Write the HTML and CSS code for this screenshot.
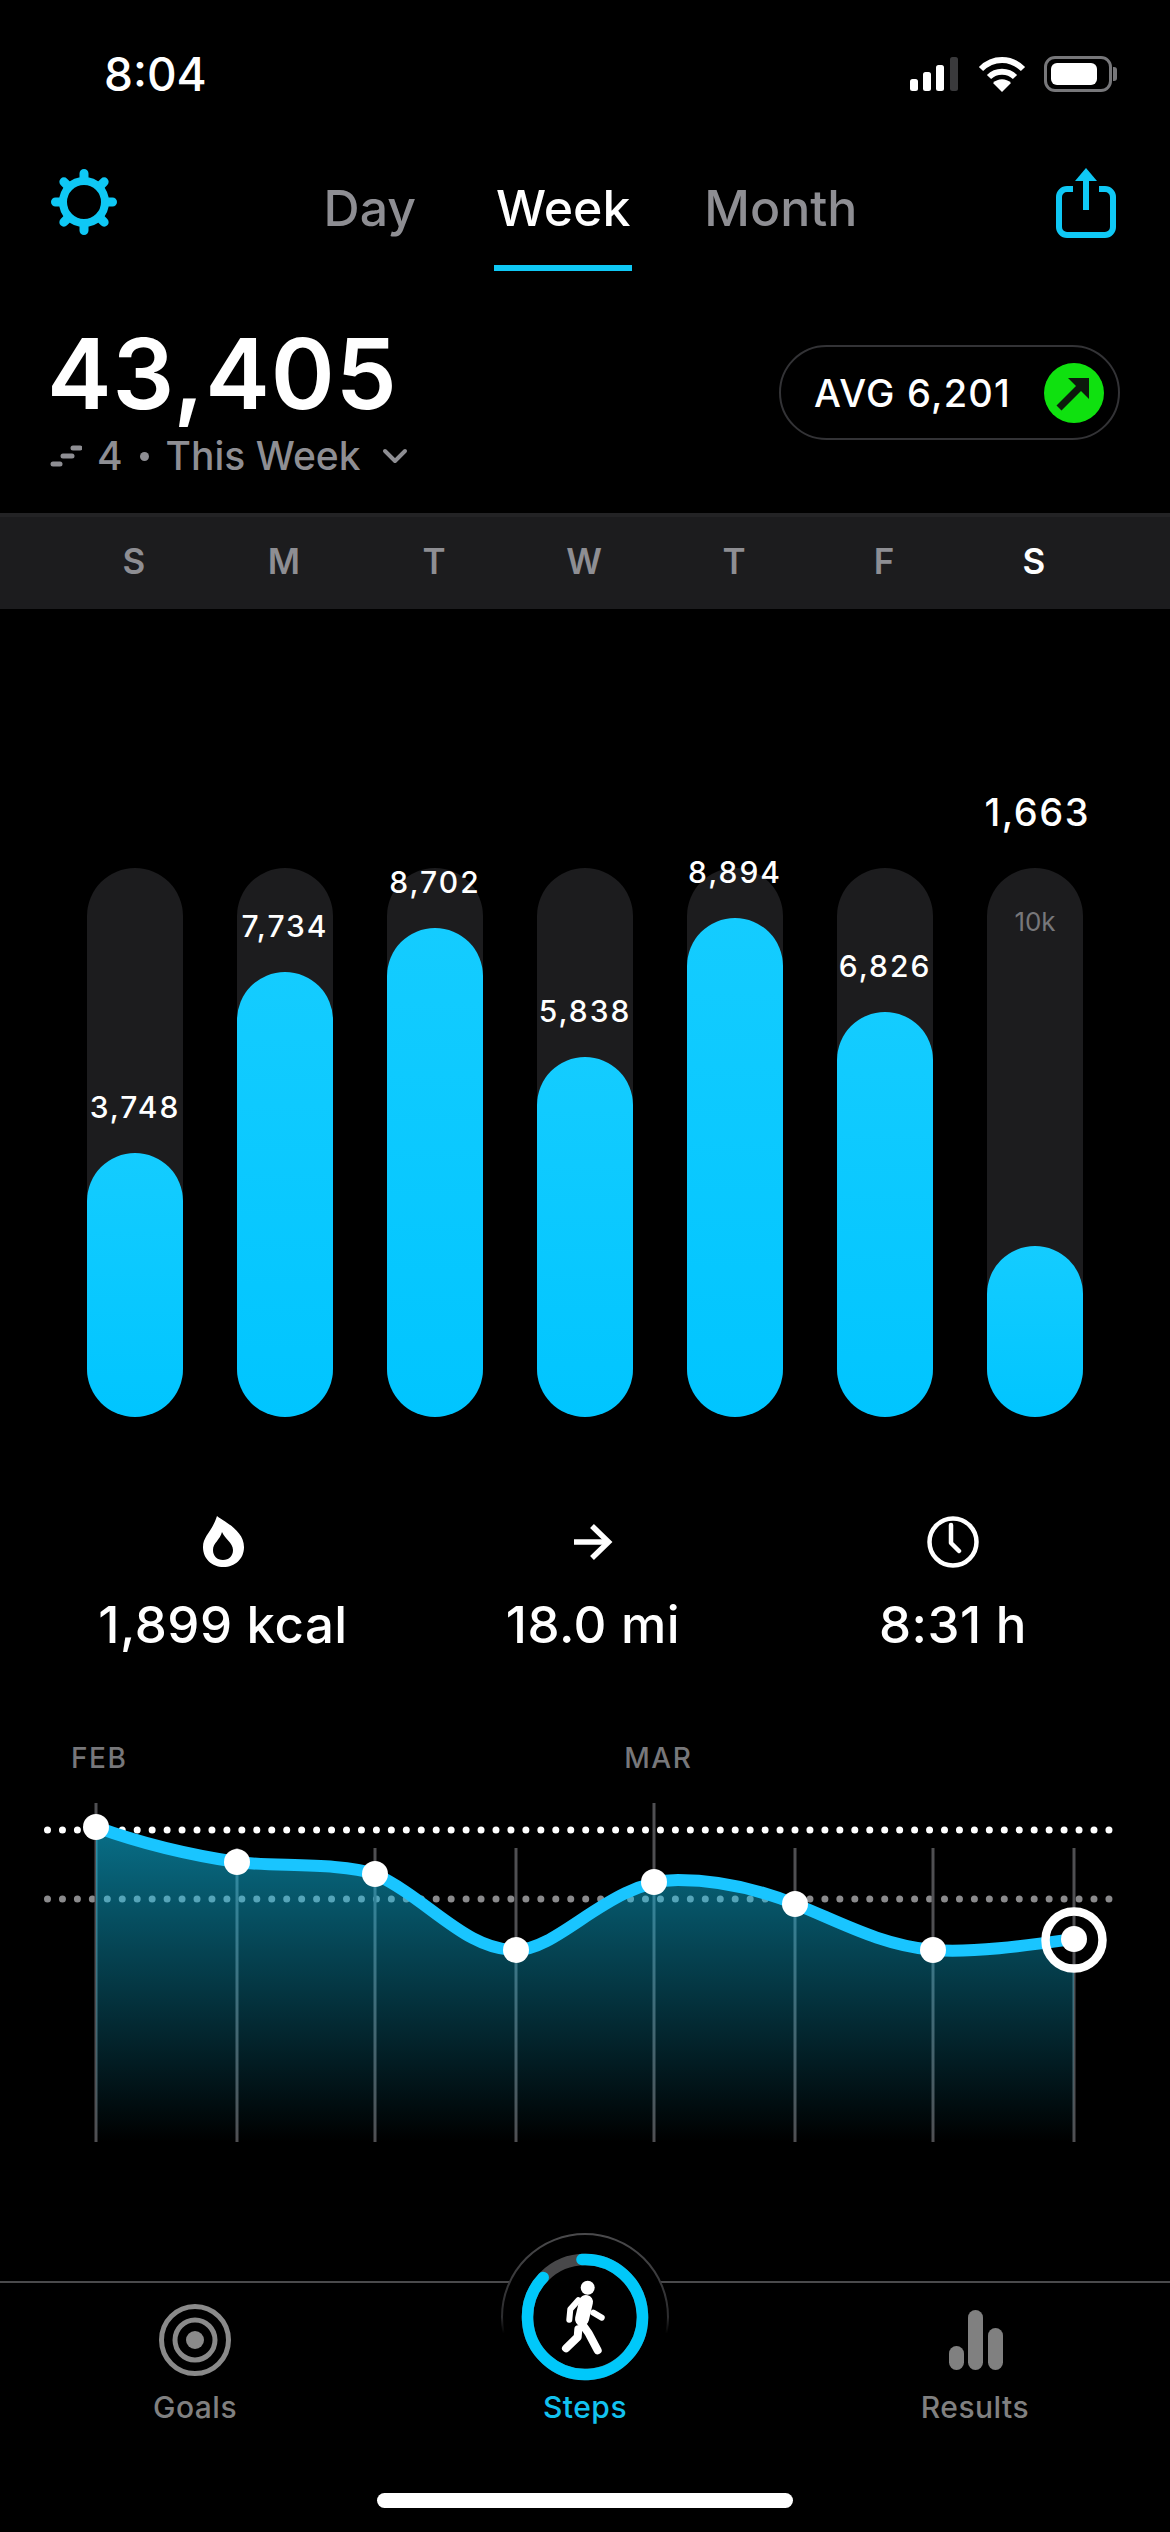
FILE: index.html
```html
<!DOCTYPE html>
<html lang="en">
<head>
  <meta charset="UTF-8" />
  <meta name="viewport" content="width=device-width, initial-scale=1.0"/>
  <title>Steps</title>
  <link rel="stylesheet" href="styles.css">
</head>
<body>

  <!-- Status bar -->
  <div class="status">
    <span class="status-time">8:04</span>
    <div class="status-icons">
      <svg class="signal" width="50" height="34" viewBox="0 0 50 34">
        <rect x="0" y="22" width="8" height="12" rx="2.5" fill="#fff"/>
        <rect x="13" y="15" width="8" height="19" rx="2.5" fill="#fff"/>
        <rect x="26" y="8" width="8" height="26" rx="2.5" fill="#fff"/>
        <rect x="40" y="0" width="8" height="34" rx="2.5" fill="#3a3a3c"/>
      </svg>
      <svg class="wifi" width="48" height="36" viewBox="0 0 48 36" fill="none" stroke="#fff" stroke-width="6">
        <path d="M3 13 C15 1 33 1 45 13"/>
        <path d="M11 21 C18 14 30 14 37 21"/>
        <path d="M24 36 L15 27 C20 22 28 22 33 27 Z" fill="#fff" stroke="none"/>
      </svg>
      <div class="battery"><div class="battery-level"></div></div>
    </div>
  </div>

  <!-- Top navigation -->
  <div class="nav">
    <svg class="gear" width="68" height="68" viewBox="0 0 68 68" fill="none" stroke="#0fc8f5">
      <circle cx="34" cy="34" r="21" stroke-width="8"/>
      <path stroke-width="9" stroke-linecap="round" d="M34 5.5 V10 M54.15 13.85 L51 17 M62.5 34 H58 M54.15 54.15 L51 51 M34 62.5 V58 M13.85 54.15 L17 51 M5.5 34 H10 M13.85 13.85 L17 17"/>
    </svg>
    <div class="range-tabs">
      <span class="range-tab">Day</span>
      <span class="range-tab active">Week</span>
      <span class="range-tab">Month</span>
    </div>
    <svg class="share" width="60" height="70" viewBox="0 0 60 70" fill="none" stroke="#0fc8f5" stroke-width="6">
      <path d="M17 21 H11 a8 8 0 0 0 -8 8 V59 a8 8 0 0 0 8 8 H49 a8 8 0 0 0 8 -8 V29 a8 8 0 0 0 -8 -8 H43"/>
      <path d="M30 42 V8"/>
      <path d="M30 0 L41 13 H19 Z" fill="#0fc8f5" stroke="none"/>
    </svg>
  </div>

  <!-- Total + average -->
  <div class="hero">
    <div>
      <div class="hero-total">43,405</div>
      <div class="hero-sub">
        <svg width="32" height="22" viewBox="0 0 32 22" stroke="#8e8e93" stroke-width="5" stroke-linecap="round">
          <path d="M3 19 H10"/>
          <path d="M13 11 H22"/>
          <path d="M23 3 H30"/>
        </svg>
        <span>4</span>
        <span class="hero-dot"></span>
        <span>This Week</span>
        <svg class="hero-chevron" width="26" height="16" viewBox="0 0 26 16" fill="none" stroke="#8e8e93" stroke-width="4" stroke-linecap="round" stroke-linejoin="round">
          <path d="M3 3 L13 13 L23 3"/>
        </svg>
      </div>
    </div>
    <div class="avg-pill">
      <span>AVG 6,201</span>
      <svg width="60" height="60" viewBox="0 0 60 60">
        <circle cx="30" cy="30" r="30" fill="#0fe10f"/>
        <path d="M15 45 L41 19" stroke="#0c1a0c" stroke-width="7" fill="none"/>
        <path d="M24 15 H45 V36 Z" fill="#0c1a0c"/>
      </svg>
    </div>
  </div>

  <!-- Weekday strip -->
  <div class="days">
    <span>S</span><span>M</span><span>T</span><span>W</span><span>T</span><span>F</span><span class="today">S</span>
  </div>

  <!-- Bars -->
  <div class="today-total">1,663</div>
  <div class="bars">
    <div class="bar-track"><span class="bar-label">3,748</span><div class="bar-fill" style="height:264px"></div></div>
    <div class="bar-track"><span class="bar-label">7,734</span><div class="bar-fill" style="height:445px"></div></div>
    <div class="bar-track"><span class="bar-label">8,702</span><div class="bar-fill" style="height:489px"></div></div>
    <div class="bar-track"><span class="bar-label">5,838</span><div class="bar-fill" style="height:360px"></div></div>
    <div class="bar-track"><span class="bar-label">8,894</span><div class="bar-fill" style="height:499px"></div></div>
    <div class="bar-track"><span class="bar-label">6,826</span><div class="bar-fill" style="height:405px"></div></div>
    <div class="bar-track"><span class="bar-goal">10k</span><div class="bar-fill" style="height:171px"></div></div>
  </div>

  <!-- Stats -->
  <div class="stats">
    <div class="stat">
      <svg width="52" height="52" viewBox="0 0 52 52">
        <path fill="#fff" fill-rule="evenodd" d="M20 0 C26 5 47 14 47 31 C47 43 38 51 26.5 51 C15 51 6 43 6 31 C6 20 15 16 20 0 Z M25 16 C28 23 36 27 36 34 C36 40 32 44 26 44 C20 44 16 40 16 34 C16 27 23 24 25 16 Z"/>
      </svg>
      <span>1,899 kcal</span>
    </div>
    <div class="stat">
      <svg width="52" height="52" viewBox="0 0 52 52" fill="none" stroke="#fff" stroke-width="5.5">
        <path d="M7 26 H41"/>
        <path d="M25 10 L41.5 26 L25 42"/>
      </svg>
      <span>18.0 mi</span>
    </div>
    <div class="stat">
      <svg width="52" height="52" viewBox="0 0 52 52" fill="none" stroke="#fff" stroke-width="4.5">
        <circle cx="26" cy="26" r="23.5"/>
        <path d="M24 9 V27 L32 35" stroke-linecap="round" stroke-linejoin="round"/>
      </svg>
      <span>8:31 h</span>
    </div>
  </div>

  <!-- Trend chart -->
  <div class="months">
    <span class="month-feb">FEB</span>
    <span class="month-mar">MAR</span>
  </div>
  <svg class="trend" width="1170" height="360" viewBox="0 1790 1170 360" fill="none">
    <defs>
      <linearGradient id="areaFade" gradientUnits="userSpaceOnUse" x1="0" y1="1830" x2="0" y2="2142">
        <stop offset="0" stop-color="#0fc8f5" stop-opacity="0.55"/>
        <stop offset="1" stop-color="#0fc8f5" stop-opacity="0"/>
      </linearGradient>
    </defs>

    <path d="M47.5 1830 H1116" stroke="#fff" stroke-width="7" stroke-linecap="round" stroke-dasharray="0 14.95"/>
    <path d="M47.5 1899 H1116" stroke="#8a8a8c" stroke-width="7" stroke-linecap="round" stroke-dasharray="0 14.95"/>

    <g stroke="#4f4f52" stroke-width="3">
      <path d="M96 1803 V2142"/>
      <path d="M237 1848 V2142"/>
      <path d="M375 1848 V2142"/>
      <path d="M516 1848 V2142"/>
      <path d="M654 1803 V2142"/>
      <path d="M795 1848 V2142"/>
      <path d="M933 1848 V2142"/>
      <path d="M1074 1848 V2142"/>
    </g>

    <path d="M96 1827 C140 1843 190 1855 237 1862 C270 1867 340 1862 375 1874 C430 1900 465 1950 516 1950 C560 1950 610 1880 678 1880 C720 1880 760 1890 795 1904 C840 1922 880 1945 933 1950 C975 1953 1030 1945 1074 1939 V2142 H96 Z" fill="url(#areaFade)"/>

    <circle cx="1074" cy="1940" r="29" fill="#000"/>
    <path d="M1074 1911 V1969" stroke="#4f4f52" stroke-width="3"/>

    <path d="M96 1827 C140 1843 190 1855 237 1862 C270 1867 340 1862 375 1874 C430 1900 465 1950 516 1950 C560 1950 610 1880 678 1880 C720 1880 760 1890 795 1904 C840 1922 880 1945 933 1950 C975 1953 1030 1945 1074 1939" stroke="#19c5ff" stroke-width="12"/>

    <g fill="#fff">
      <circle cx="96" cy="1827" r="13"/>
      <circle cx="237" cy="1862" r="13"/>
      <circle cx="375" cy="1874" r="13"/>
      <circle cx="516" cy="1950" r="13"/>
      <circle cx="654" cy="1882" r="13"/>
      <circle cx="795" cy="1904" r="13"/>
      <circle cx="933" cy="1950" r="13"/>
      <circle cx="1074" cy="1939" r="13"/>
    </g>
    <circle cx="1074" cy="1940" r="28.5" stroke="#fff" stroke-width="8.5"/>
  </svg>

  <!-- Tab bar -->
  <div class="tabbar">
    <div class="tab">
      <svg width="72" height="72" viewBox="0 0 72 72" fill="none" stroke="#8a8a8a" stroke-width="5">
        <circle cx="36" cy="36" r="33.5"/>
        <circle cx="36" cy="36" r="20"/>
        <circle cx="36" cy="36" r="9" fill="#8a8a8a" stroke="none"/>
      </svg>
      <span>Goals</span>
    </div>
    <div class="tab tab-main">
      <svg width="168" height="156" viewBox="0 0 168 156" fill="none">
        <defs>
          <linearGradient id="rimFade" x1="0" y1="0" x2="0" y2="1">
            <stop offset="0" stop-color="#4a4a4c"/>
            <stop offset="0.5" stop-color="#2c2c2e"/>
            <stop offset="0.6" stop-color="#000"/>
          </linearGradient>
        </defs>
        <circle cx="84" cy="84" r="83" fill="#000" stroke="url(#rimFade)" stroke-width="2"/>
        <circle cx="84" cy="84" r="57.5" stroke="#48484a" stroke-width="11.5"/>
        <circle cx="84" cy="84" r="57.5" stroke="#00c8fa" stroke-width="11.5" stroke-linecap="round" stroke-dasharray="317 361.3" transform="rotate(-93 84 84)"/>
        <circle cx="86.7" cy="54.7" r="7" fill="#fff"/>
        <g fill="none" stroke="#fff" stroke-linecap="round" stroke-linejoin="round">
          <path d="M85 69 L81 86" stroke-width="14"/>
          <path d="M77.3 67.3 L69.3 76.3 L68.3 86.7" stroke-width="6"/>
          <path d="M92.3 79.7 L100.7 84.7" stroke-width="6"/>
          <path d="M79 88 L87.3 99.7 L96.7 117.3" stroke-width="8"/>
          <path d="M77.3 96.3 L76.7 104 L65 115.3" stroke-width="8"/>
        </g>
      </svg>
      <span>Steps</span>
    </div>
    <div class="tab">
      <svg width="72" height="72" viewBox="0 0 72 72" fill="#808080">
        <rect x="10" y="42" width="15" height="24" rx="7.5"/>
        <rect x="29" y="6" width="15" height="60" rx="7.5"/>
        <rect x="49" y="24" width="15" height="42" rx="7.5"/>
      </svg>
      <span>Results</span>
    </div>
  </div>

  <div class="home-bar"></div>

</body>
</html>
```

FILE: styles.css
```css
* {
  box-sizing: border-box;
}

body {
  margin: 0;
  width: 1170px;
  height: 2532px;
  overflow: hidden;
  background-color: #000;
  color: #fff;
  font-family: Inter, "Liberation Sans", sans-serif;
}

svg {
  display: block;
}

/* Status bar */
.status {
  display: flex;
  justify-content: space-between;
  align-items: center;
  height: 106px;
  padding: 42px 58px 0 104px;
}

.status-time {
  font-size: 46px;
  font-weight: 500;
  line-height: 64px;
}

.status-icons {
  display: flex;
  align-items: center;
  gap: 18px;
}

.battery {
  position: relative;
  width: 68px;
  height: 36px;
  padding: 4px;
  border: 3px solid #77777a;
  border-radius: 11px;
}

.battery-level {
  width: 46px;
  height: 100%;
  background-color: #fff;
  border-radius: 6px;
}

.battery::after {
  content: "";
  position: absolute;
  top: 8px;
  right: -8px;
  width: 4px;
  height: 14px;
  background-color: #77777a;
  border-radius: 0 3px 3px 0;
}

/* Top navigation */
.nav {
  display: flex;
  justify-content: space-between;
  align-items: flex-start;
  height: 194px;
  padding: 62px 54px 0 50px;
}

.range-tabs {
  display: flex;
  gap: 76px;
  margin-top: 10px;
  margin-left: 7px;
}

.range-tab {
  padding-bottom: 27px;
  font-size: 50px;
  font-weight: 500;
  line-height: 60px;
  color: #8e8e93;
}

.range-tab.active {
  margin: 0 -4px 0 2px;
  padding-left: 2px;
  padding-right: 2px;
  color: #fff;
  border-bottom: 6px solid #0fc8f5;
}

/* Total + average */
.hero {
  display: flex;
  justify-content: space-between;
  align-items: flex-start;
  height: 213px;
  padding: 34px 50px 0 47px;
}

.hero-total {
  font-size: 97px;
  font-weight: 600;
  line-height: 80px;
  letter-spacing: 1px;
}

.hero-sub {
  display: flex;
  align-items: center;
  gap: 15px;
  margin-top: 22px;
  margin-left: 3px;
  font-size: 39px;
  font-weight: 500;
  line-height: 40px;
  color: #8e8e93;
}

.hero-sub .hero-dot {
  margin: 0 2px;
}

.hero-dot {
  width: 9px;
  height: 9px;
  background-color: #8e8e93;
  border-radius: 50%;
}

.hero-chevron {
  margin-left: 6px;
}

.avg-pill {
  display: flex;
  align-items: center;
  gap: 33px;
  height: 95px;
  margin-top: 11px;
  padding: 0 14px 0 33px;
  border: 2px solid #333336;
  border-radius: 48px;
  font-size: 38px;
  font-weight: 500;
  letter-spacing: 1.2px;
}

/* Weekday strip */
.days {
  display: grid;
  grid-template-columns: repeat(7, 150px);
  height: 96px;
  padding-left: 59px;
  background-color: #1c1c1e;
  border-top: 4px solid #232325;
  font-size: 35px;
  font-weight: 600;
  line-height: 88px;
  text-align: center;
  color: #8e8e93;
}

.days .today {
  color: #fff;
}

/* Bars */
.today-total {
  width: 1124px;
  margin-top: 181px;
  font-size: 38px;
  font-weight: 500;
  line-height: 44px;
  letter-spacing: 1.5px;
  text-align: right;
  padding-right: 34px;
}

.bars {
  display: flex;
  gap: 54px;
  margin-top: 34px;
  padding-left: 87px;
}

.bar-track {
  display: flex;
  flex-direction: column;
  justify-content: flex-end;
  align-items: center;
  position: relative;
  width: 96px;
  height: 549px;
  background-color: #1c1c1e;
  border-radius: 48px;
}

.bar-fill {
  flex: none;
  width: 100%;
  background: linear-gradient(#14ccff, #00c5ff);
  border-radius: 48px;
}

.bar-label {
  margin-bottom: 28px;
  font-size: 30px;
  font-weight: 500;
  line-height: 36px;
  letter-spacing: 2px;
  white-space: nowrap;
}

.bar-goal {
  position: absolute;
  top: 39px;
  font-size: 26px;
  line-height: 30px;
  color: #77777a;
}

/* Stats */
.stats {
  display: grid;
  grid-template-columns: 300px 440px 280px;
  margin-top: 99px;
  padding-left: 73px;
}

.stat {
  display: flex;
  flex-direction: column;
  align-items: center;
  gap: 32px;
  font-size: 51px;
  font-weight: 500;
  line-height: 50px;
  letter-spacing: 0.5px;
}

/* Trend chart */
.months {
  display: flex;
  margin-top: 93px;
  padding-left: 71px;
  font-size: 28px;
  font-weight: 500;
  line-height: 30px;
  color: #77777a;
  letter-spacing: 1.5px;
}

.month-mar {
  margin-left: 497px;
}

.trend {
  margin-top: 17px;
}

/* Tab bar */
.tabbar {
  display: grid;
  grid-template-columns: repeat(3, 390px);
  height: 144px;
  margin-top: 131px;
  border-top: 2px solid #4a4a4c;
}

.tab {
  display: flex;
  flex-direction: column;
  align-items: center;
  padding-top: 21px;
  gap: 13px;
  font-size: 30px;
  font-weight: 500;
  line-height: 36px;
  letter-spacing: 0.5px;
  color: #808080;
}

.tab-main {
  margin-top: -50px;
  padding-top: 0;
  gap: 0;
  color: #12c2f0;
}

.home-bar {
  width: 416px;
  height: 15px;
  margin: 68px auto 0;
  background-color: #fff;
  border-radius: 8px;
}
```
